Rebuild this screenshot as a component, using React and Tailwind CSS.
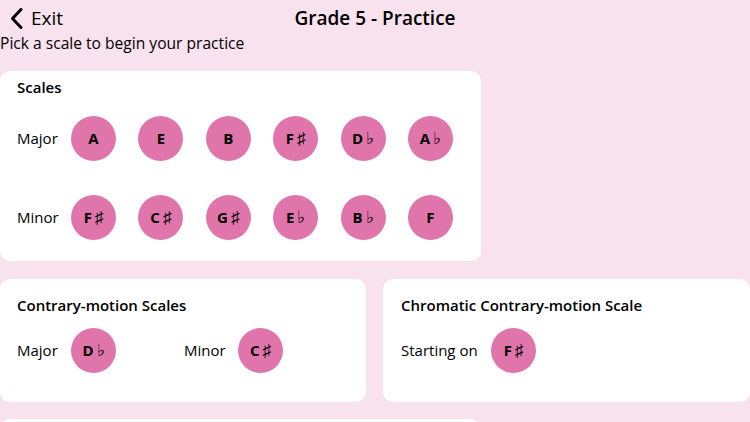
import React from "react";

function Note({ n }) {
  const letter = n[0];
  const acc = n.slice(1);
  return (
    <div className="w-[45px] h-[45px] rounded-full bg-[#df75ab] flex items-center justify-center text-black shrink-0">
      <span className="text-[15px] font-bold leading-none">{letter}</span>
      {acc && (
        <span className="ml-[3px] text-[17px] font-extralight leading-none font-['DejaVu_Sans',sans-serif]">
          {acc}
        </span>
      )}
    </div>
  );
}

function Row({ label, notes }) {
  return (
    <div className="flex items-center">
      <div className="w-[54px] text-[15px] text-black">{label}</div>
      <div className="flex gap-[22.4px]">
        {notes.map((n, i) => (
          <Note key={i} n={n} />
        ))}
      </div>
    </div>
  );
}

export default function App() {
  return (
    <div className="w-[750px] h-[422px] overflow-hidden bg-[#f8e2ee] font-['Open_Sans',sans-serif] text-black">
      <div className="grid grid-cols-[1fr_auto_1fr] items-center h-[36px]">
        <div className="flex items-center pl-[10px]">
          <svg width="13" height="21" viewBox="0 0 13 21" className="shrink-0">
            <path d="M11 1.5 L2.5 10.5 L11 19.5" fill="none" stroke="#000" strokeWidth="3" strokeLinecap="round" strokeLinejoin="round" />
          </svg>
          <span className="ml-[8px] text-[19px] leading-none">Exit</span>
        </div>
        <div className="text-[19px] font-semibold leading-none">Grade 5 - Practice</div>
        <div />
      </div>
      <p className="text-[15.6px] leading-[16px] mt-[-1px]">Pick a scale to begin your practice</p>

      <div className="mt-[20px] w-[481px] h-[190px] bg-white rounded-[10px] pl-[17px] pt-[6px]">
        <div className="text-[15px] font-semibold leading-[20px]">Scales</div>
        <div className="mt-[19px] flex flex-col gap-[34px]">
          <Row label="Major" notes={["A", "E", "B", "F♯", "D♭", "A♭"]} />
          <Row label="Minor" notes={["F♯", "C♯", "G♯", "E♭", "B♭", "F"]} />
        </div>
      </div>

      <div className="mt-[18px] flex gap-[17px]">
        <div className="w-[366px] h-[123px] bg-white rounded-[10px] pl-[17px] pt-[16px]">
          <div className="text-[15px] font-semibold leading-[20px]">Contrary-motion Scales</div>
          <div className="mt-[13px] flex items-center">
            <div className="w-[54px] text-[15px]">Major</div>
            <Note n="D♭" />
            <div className="ml-[68px] w-[54px] text-[15px]">Minor</div>
            <Note n="C♯" />
          </div>
        </div>
        <div className="flex-1 h-[123px] bg-white rounded-[10px] pl-[18px] pt-[16px]">
          <div className="text-[15px] font-semibold leading-[20px]">Chromatic Contrary-motion Scale</div>
          <div className="mt-[13px] flex items-center">
            <div className="w-[90px] text-[15px]">Starting on</div>
            <Note n="F♯" />
          </div>
        </div>
      </div>

      <div className="mt-[17px] w-[480px] h-[40px] bg-white rounded-[10px]" />
    </div>
  );
}
